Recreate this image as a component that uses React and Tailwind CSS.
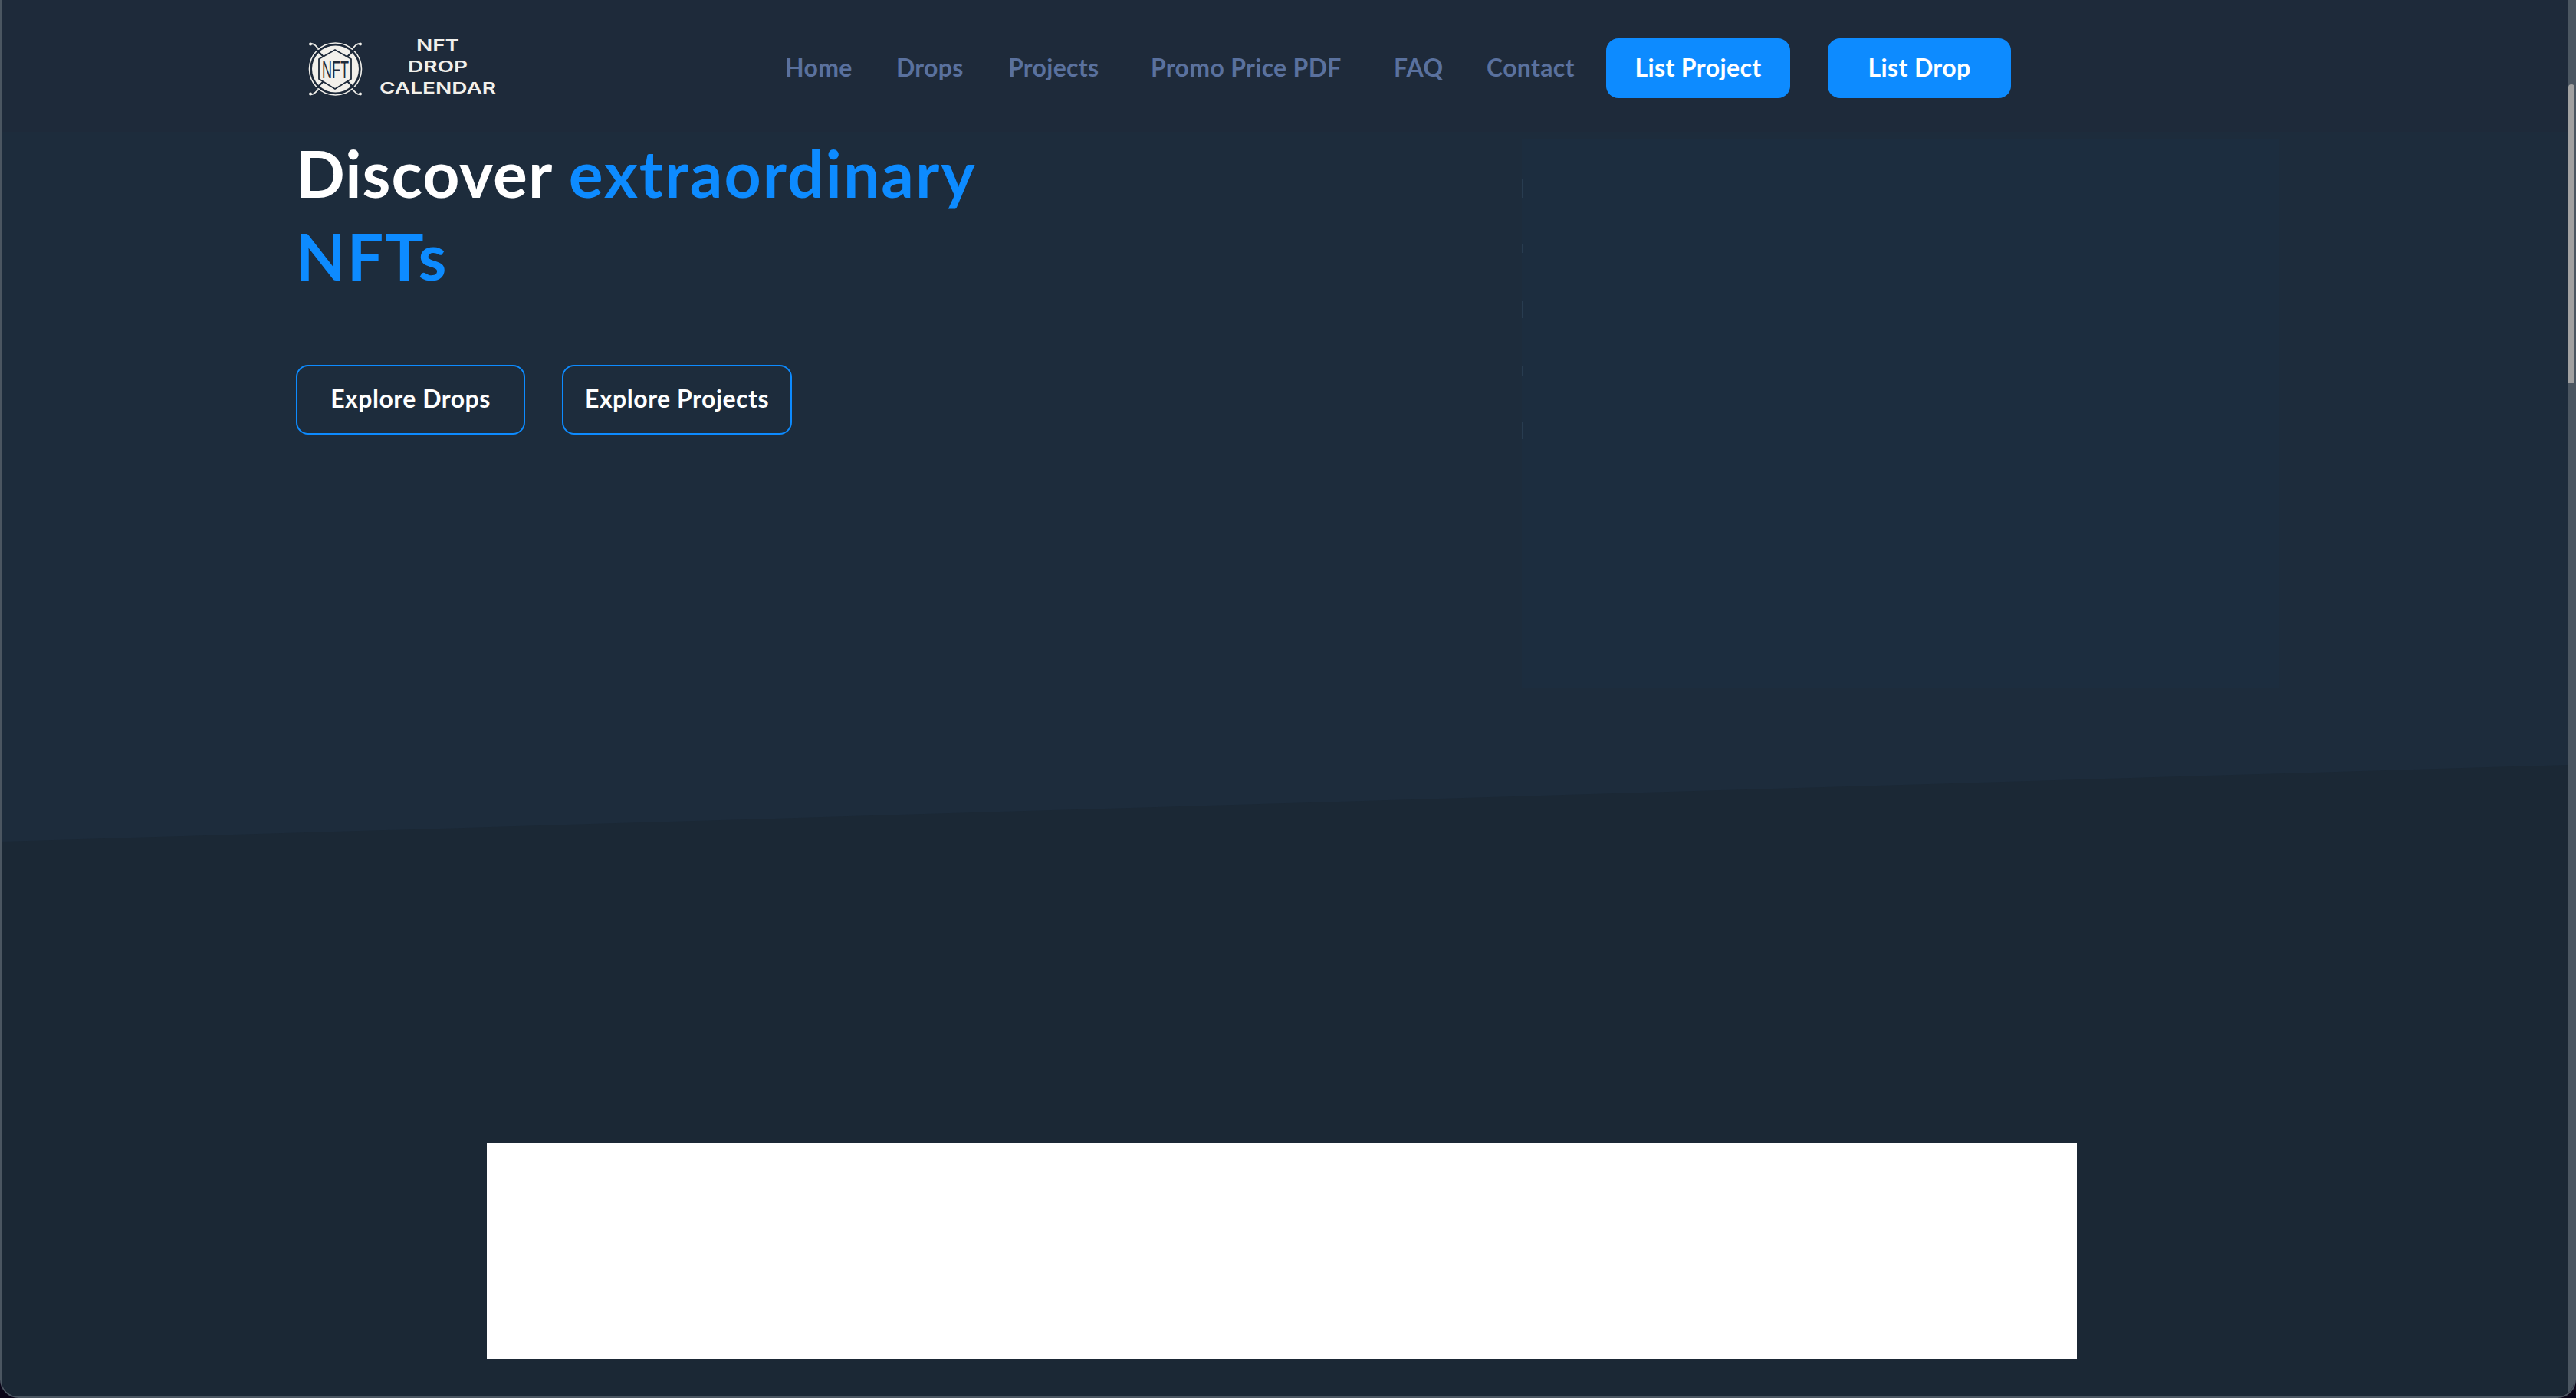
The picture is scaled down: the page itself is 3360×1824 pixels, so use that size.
import React from "react";

const NAV_LINKS = [
  { label: "Home", className: "w-[87px]" },
  { label: "Drops", className: "w-[88px] ml-[58px]" },
  { label: "Projects", className: "w-[118px] ml-[58px]" },
  { label: "Promo Price PDF", className: "w-[251px] ml-[68px]" },
  { label: "FAQ", className: "w-[64px] ml-[66px]" },
  { label: "Contact", className: "w-[114px] ml-[57px]" },
];

// faint marks down the left edge of the hero panel
const PANEL_TICKS = [
  { id: 1, className: "mt-[52px] h-[24px]" },
  { id: 2, className: "mt-[60px] h-[12px]" },
  { id: 3, className: "mt-[63px] h-[22px]" },
  { id: 4, className: "mt-[62px] h-[13px]" },
  { id: 5, className: "mt-[60px] h-[23px]" },
];

function Logo() {
  return (
    <div className="flex items-center">
      <svg width="100" height="90" viewBox="0 0 100 90" className="-mt-[4px] ml-[9px] shrink-0">
        <circle cx="42.5" cy="48" r="34" fill="none" stroke="#f2f0eb" strokeWidth="1.6" />
        <circle cx="42.5" cy="48" r="30.5" fill="#f2f0eb" />
        <g fill="none" stroke="#1e2a3a" strokeWidth="2.4">
          <path d="M15 20 L28 33 M70 20 L57 33 M15 76 L28 63 M70 76 L57 63" />
        </g>
        <g fill="none" stroke="#f2f0eb" strokeWidth="1.8" strokeLinecap="round">
          <path d="M10 15 C15 15 16 17 20 21 M75 15 C70 15 69 17 65 21 M10 81 C15 81 16 79 20 75 M75 81 C70 81 69 79 65 75" />
        </g>
        <g fill="#f2f0eb">
          <circle cx="10" cy="15.5" r="2" />
          <circle cx="75" cy="15.5" r="2" />
          <circle cx="10" cy="80.5" r="2" />
          <circle cx="75" cy="80.5" r="2" />
        </g>
        <g fill="#1e2a3a">
          <circle cx="21" cy="25" r="2.2" />
          <circle cx="64" cy="25" r="2.2" />
          <circle cx="21" cy="71" r="2.2" />
          <circle cx="64" cy="71" r="2.2" />
        </g>
        <path d="M42 23 L63 35 L63 61 L42 74 L21 61 L21 35 Z" fill="#f2f0eb" stroke="#1e2a3a" strokeWidth="1.8" strokeLinejoin="round" />
        <text x="25" y="60" textLength="35" lengthAdjust="spacingAndGlyphs" fill="#1e2a3a" className="font-['Liberation_Sans',sans-serif] text-[32px]">
          NFT
        </text>
      </svg>
      <div className="-mt-[5px] ml-[1px] flex w-[150px] scale-x-[1.4] flex-col items-center font-['Inter',sans-serif] text-[20px] font-semibold leading-[28px] text-[#f2f0eb]">
        <span>NFT</span>
        <span>DROP</span>
        <span>CALENDAR</span>
      </div>
    </div>
  );
}

function Header() {
  return (
    <header className="flex h-[172px] shrink-0 items-center bg-[#1e2a3a] pl-[384px] pt-[6px]">
      <div className="w-[638px] shrink-0">
        <Logo />
      </div>
      <nav className="-mt-[2px] flex items-center text-[32px] font-bold tracking-[0.3px] text-[#5a719e]">
        {NAV_LINKS.map((link) => (
          <a key={link.label} className={`whitespace-nowrap ${link.className}`}>
            {link.label}
          </a>
        ))}
      </nav>
      <button className="ml-[42px] h-[78px] w-[240px] rounded-[16px] bg-[#0d8bff] pb-[2px] text-[32px] font-bold tracking-[0.4px] text-white">
        List Project
      </button>
      <button className="ml-[49px] h-[78px] w-[239px] rounded-[16px] bg-[#0d8bff] pb-[2px] text-[32px] font-bold tracking-[0.4px] text-white">
        List Drop
      </button>
    </header>
  );
}

function Hero() {
  return (
    <section className="flex h-[926px] shrink-0 bg-[#1d2c3c] [clip-path:polygon(0_0,100%_0,100%_89.2%,0_100%)]">
      <div className="w-[1983px] shrink-0 pl-[384px]">
        <h1 className="w-[1000px] text-[84px] font-bold leading-[108px] text-white">
          <span className="tracking-[1px]">Discover</span>{" "}
          <span className="tracking-[2px] text-[#0d8bff]">extraordinary</span>{" "}
          <span className="tracking-[2px] text-[#0d8bff]">NFTs</span>
        </h1>
        <div className="mt-[88px] flex gap-[48px]">
          <button className="h-[91px] w-[299px] rounded-[16px] border-2 border-[#0d8bff] pb-[3px] text-[32px] font-bold tracking-[0.5px] text-white">
            Explore Drops
          </button>
          <button className="h-[91px] w-[300px] rounded-[16px] border-2 border-[#0d8bff] pb-[3px] text-[32px] font-bold tracking-[0.5px] text-white">
            Explore Projects
          </button>
        </div>
      </div>
      <div className="mt-[10px] h-[715px] w-[987px] bg-[#1c2d3f]">
        <div className="flex w-px flex-col">
          {PANEL_TICKS.map((tick) => (
            <span key={tick.id} className={`block w-px bg-[#283c50] ${tick.className}`} />
          ))}
        </div>
      </div>
    </section>
  );
}

export default function App() {
  return (
    <div className="h-[1824px] w-[3360px] overflow-hidden bg-[#0a0518] font-['Lato',sans-serif]">
      <div className="flex h-full overflow-hidden rounded-b-[24px] border-x-2 border-b-2 border-x-[#4b5661] border-b-[#4b5661]">
        <main className="flex min-w-0 flex-1 flex-col bg-[#1b2835]">
          <Header />
          <Hero />
          <div className="ml-[633px] mt-[393px] h-[282px] w-[2074px] bg-white" />
        </main>
        <div className="w-[8px] shrink-0 bg-[#4b5661] pt-[110px]">
          <div className="h-[390px] rounded-t-[4px] bg-[#a1a1a1]" />
        </div>
      </div>
    </div>
  );
}
